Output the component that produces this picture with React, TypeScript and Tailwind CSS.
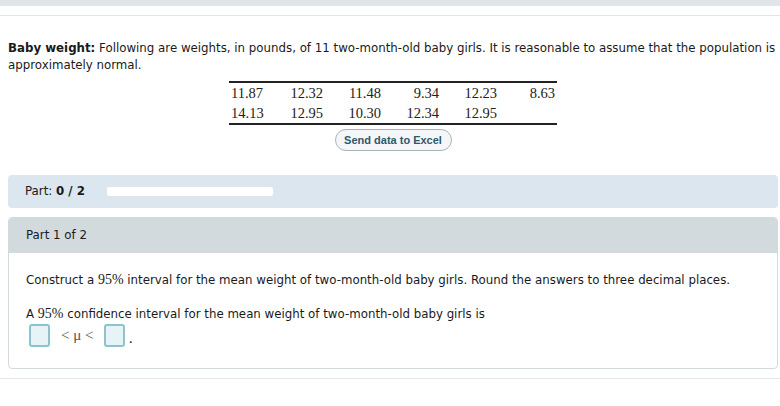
const row1 = ["11.87", "12.32", "11.48", "9.34", "12.23", "8.63"];
const row2 = ["14.13", "12.95", "10.30", "12.34", "12.95", ""];

const AnswerBox = () => (
  <span className="inline-block h-[23px] w-[21px] rounded-[3px] border-2 border-[#8cc3cf] bg-[#e6f4f8]" />
);

export default function App() {
  return (
    <div className="min-h-[406px] bg-white font-['DejaVu_Sans',sans-serif] text-[11.8px] text-[#1a1a1a]">
      <div className="h-[6px] bg-[#dfe5e8]" />
      <div className="mt-[9px] border-t border-[#e2e6e6]" />

      <div className="pl-2 pr-[2px] pt-[24px]">
        <p className="leading-[17px]">
          <b>Baby weight:</b> Following are weights, in pounds, of 11 two-month-old baby girls. It is reasonable to assume that the
          population is approximately normal.
        </p>

        <div className="mt-[7px] flex flex-col items-center">
          <table className="border-y-2 border-[#222] font-['Liberation_Serif',serif] text-[14.5px] text-[#222]">
            <tbody>
              {[row1, row2].map((row, i) => (
                <tr key={i}>
                  {row.map((v, j) => (
                    <td
                      key={j}
                      className={`leading-[20px] ${j === 0 ? "w-[38px] pl-[2px] text-left" : "w-[58px] pr-[2px] text-right"}`}
                    >
                      {v}
                    </td>
                  ))}
                </tr>
              ))}
            </tbody>
          </table>
          <button className="mt-[4px] h-[22px] w-[117px] rounded-full border border-[#a9b4ba] bg-[#f4f6f7] font-['Liberation_Sans',sans-serif] text-[11px] font-bold text-[#2f5868]">
            Send data to Excel
          </button>
        </div>

        <div className="mt-[24px] flex h-[33px] items-center rounded-[4px] bg-[#dbe6ef] pl-[17px]">
          <span>
            Part: <b>0 / 2</b>
          </span>
          <div className="ml-[22px] h-[9px] w-[166px] rounded-[2px] bg-white" />
        </div>

        <div className="mt-[9px] overflow-hidden rounded-[4px] border border-[#d3dadd]">
          <div className="flex h-[35px] items-center bg-[#d3dadd] pl-[17px]">Part 1 of 2</div>
          <div className="px-[17px] pb-[19px] pt-[18px]">
            <p className="leading-[17px]">
              Construct a <span className="font-['Liberation_Serif',serif] text-[14px]">95%</span> interval for the mean weight of
              two-month-old baby girls. Round the answers to three decimal places.
            </p>
            <p className="mt-[16px] leading-[17px]">
              A <span className="font-['Liberation_Serif',serif] text-[14px]">95%</span> confidence interval for the mean weight of
              two-month-old baby girls is
            </p>
            <div className="-mt-[1px] flex items-center pl-[3px]">
              <AnswerBox />
              <span className="mx-[11px] font-['Liberation_Serif',serif] text-[15px] text-[#555]">&lt; μ &lt;</span>
              <AnswerBox />
              <span className="ml-[3px] mt-[6px] text-[14px]">.</span>
            </div>
          </div>
        </div>
      </div>
      <div className="mt-[9px] border-t border-[#e2e6e6]" />
    </div>
  );
}
